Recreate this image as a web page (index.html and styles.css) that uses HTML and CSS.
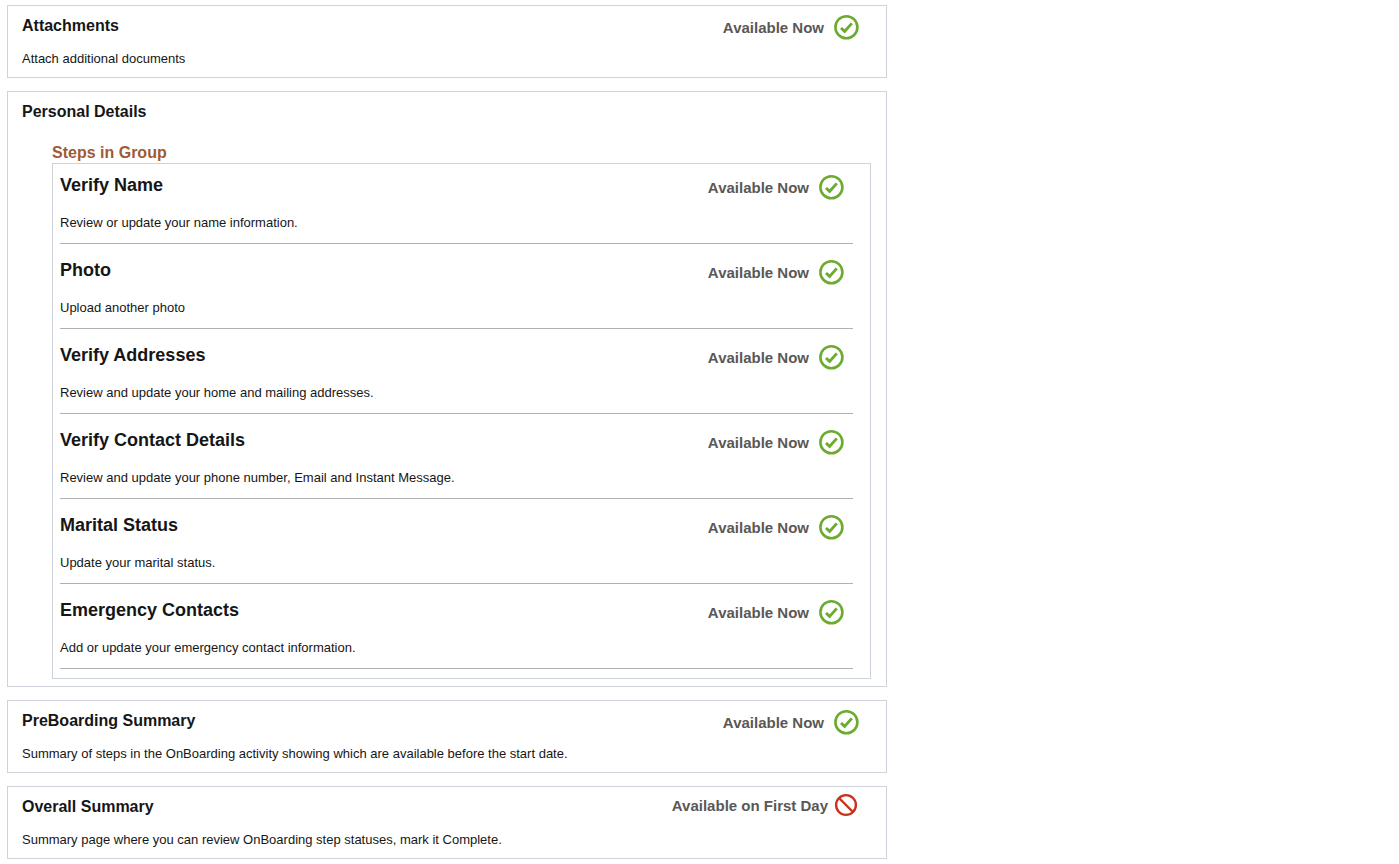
FILE: index.html
```html
<!DOCTYPE html>
<html lang="en">
<head>
<meta charset="utf-8">
<title>Onboarding Steps</title>
<link rel="stylesheet" href="styles.css">
</head>
<body>
<svg class="defs" aria-hidden="true">
  <symbol id="ok" viewBox="0 0 26 26"><circle cx="13.4" cy="13.2" r="11" fill="none" stroke="#6cab30" stroke-width="2.6"/><path d="M8 14l3.6 3.4 7.2-8" fill="none" stroke="#6cab30" stroke-width="2.9"/></symbol>
  <symbol id="no" viewBox="0 0 26 26"><circle cx="13" cy="13" r="9.9" fill="none" stroke="#c8321f" stroke-width="2.4"/><path d="M6 6l14 14" fill="none" stroke="#c8321f" stroke-width="2.4"/></symbol>
</svg>
<main class="page">
  <section class="card">
    <div class="row"><h2 class="title">Attachments</h2><div class="status">Available Now<svg class="icon"><use href="#ok"/></svg></div></div>
    <p class="text">Attach additional documents</p>
  </section>
  <section class="card group">
    <h2 class="title">Personal Details</h2>
    <h3 class="label">Steps in Group</h3>
    <ul class="steps">
      <li class="step"><div class="row"><h4 class="name">Verify Name</h4><div class="status">Available Now<svg class="icon"><use href="#ok"/></svg></div></div><p class="text">Review or update your name information.</p></li>
      <li class="step"><div class="row"><h4 class="name">Photo</h4><div class="status">Available Now<svg class="icon"><use href="#ok"/></svg></div></div><p class="text">Upload another photo</p></li>
      <li class="step"><div class="row"><h4 class="name">Verify Addresses</h4><div class="status">Available Now<svg class="icon"><use href="#ok"/></svg></div></div><p class="text">Review and update your home and mailing addresses.</p></li>
      <li class="step"><div class="row"><h4 class="name">Verify Contact Details</h4><div class="status">Available Now<svg class="icon"><use href="#ok"/></svg></div></div><p class="text">Review and update your phone number, Email and Instant Message.</p></li>
      <li class="step"><div class="row"><h4 class="name">Marital Status</h4><div class="status">Available Now<svg class="icon"><use href="#ok"/></svg></div></div><p class="text">Update your marital status.</p></li>
      <li class="step"><div class="row"><h4 class="name">Emergency Contacts</h4><div class="status">Available Now<svg class="icon"><use href="#ok"/></svg></div></div><p class="text">Add or update your emergency contact information.</p></li>
    </ul>
  </section>
  <section class="card">
    <div class="row"><h2 class="title">PreBoarding Summary</h2><div class="status">Available Now<svg class="icon"><use href="#ok"/></svg></div></div>
    <p class="text">Summary of steps in the OnBoarding activity showing which are available before the start date.</p>
  </section>
  <section class="card">
    <div class="row"><h2 class="title">Overall Summary</h2><div class="status blocked">Available on First Day<svg class="icon"><use href="#no"/></svg></div></div>
    <p class="text">Summary page where you can review OnBoarding step statuses, mark it Complete.</p>
  </section>
</main>
</body>
</html>
```
FILE: styles.css
```css
* { box-sizing: border-box; }
body { margin: 0; background: #fff; color: #161616; font-family: "Liberation Sans", Arial, sans-serif; }
h2, h3, h4, p, ul { margin: 0; padding: 0; }
.defs { display: none; }
.page { display: flex; flex-direction: column; gap: 13px; max-width: 894px; padding: 5px 7px; }
.card { border: 1px solid #ced2da; padding: 8px 27px 7px 14px; }
.row { display: flex; justify-content: space-between; align-items: flex-start; height: 34px; }
.title { font-size: 16px; line-height: 24px; }
.text { font-size: 13px; line-height: 22px; }
.status { display: flex; align-items: center; gap: 9px; height: 26px; color: #5a5856; font-size: 15px; font-weight: bold; }
.blocked { gap: 5px; height: 20px; }
.icon { width: 26px; height: 26px; }
.group { padding: 8px 15px 7px 14px; }
.label { margin: 18px 0 0 30px; color: #a05a37; font-size: 16px; line-height: 21px; }
.steps { margin-left: 30px; padding: 0 17px 9px 7px; border: 1px solid #ced2da; list-style: none; }
.step { padding: 10px 0 9px; border-bottom: 1px solid #b3b1b0; }
.step + .step { padding-top: 15px; }
.step .row { height: 38px; padding-right: 9px; }
.name { font-size: 18px; line-height: 22px; }
```
